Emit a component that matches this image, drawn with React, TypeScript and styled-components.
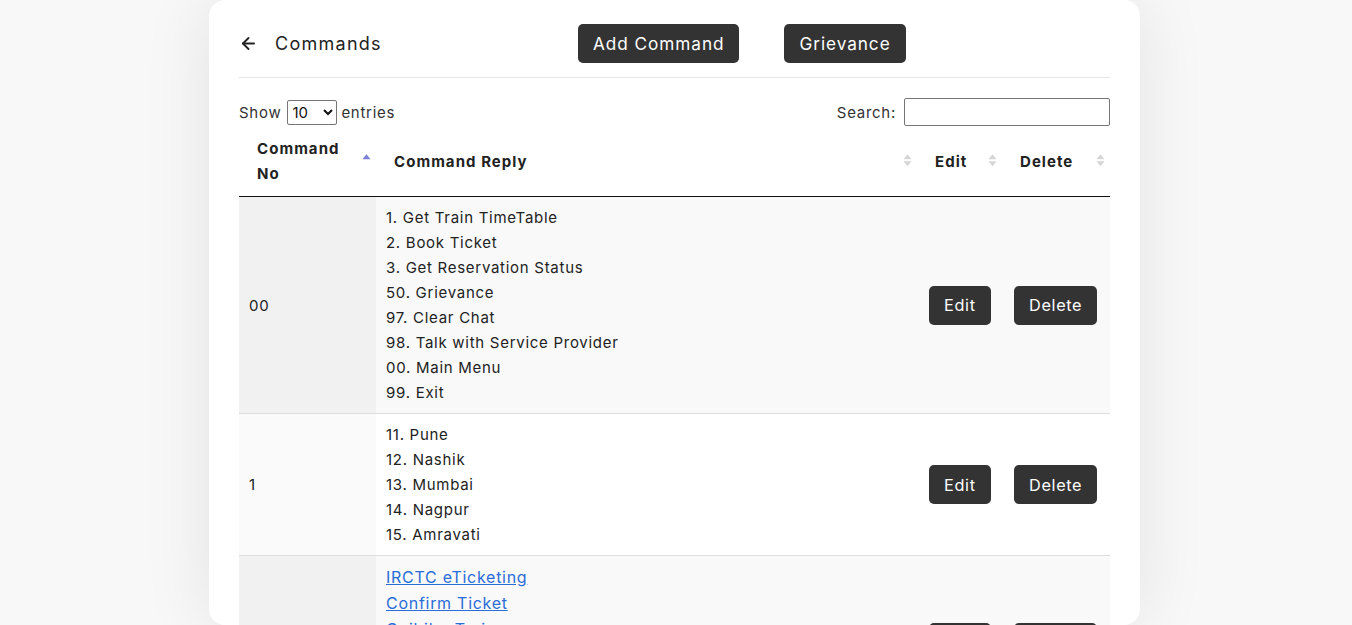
import React from "react";
import styled, { createGlobalStyle } from "styled-components";
import { ArrowLeft } from "lucide-react";

const GlobalStyle = createGlobalStyle`
  html, body {
    margin: 0;
    padding: 0;
    height: 625px;
    overflow: hidden;
    background: #f8f8f8;
    font-family: "Inter", "Open Sans", sans-serif;
    letter-spacing: 0.045em;
    color: #222;
  }
`;

type Row = {
  no: string;
  lines: string[];
  links?: boolean;
};

const rows: Row[] = [
  {
    no: "00",
    lines: [
      "1. Get Train TimeTable",
      "2. Book Ticket",
      "3. Get Reservation Status",
      "50. Grievance",
      "97. Clear Chat",
      "98. Talk with Service Provider",
      "00. Main Menu",
      "99. Exit",
    ],
  },
  {
    no: "1",
    lines: ["11. Pune", "12. Nashik", "13. Mumbai", "14. Nagpur", "15. Amravati"],
  },
  {
    no: "",
    links: true,
    lines: [
      "IRCTC eTicketing",
      "Confirm Ticket",
      "Goibibo Trains",
      "MakeMyTrip Trains",
      "RailYatri",
      "ixigo Trains",
    ],
  },
];

export default function App() {
  return (
    <>
      <GlobalStyle />
      <Page>
        <Card>
          <Header>
            <TitleGroup>
              <ArrowLeft size={19} strokeWidth={2.4} color="#222" />
              <Title>Commands</Title>
            </TitleGroup>
            <DarkButton large>Add Command</DarkButton>
            <DarkButton large>Grievance</DarkButton>
          </Header>

          <Controls>
            <Label>
              Show
              <Select defaultValue="10">
                <option value="10">10</option>
                <option value="25">25</option>
                <option value="50">50</option>
              </Select>
              entries
            </Label>
            <Label>
              Search:
              <SearchInput type="text" />
            </Label>
          </Controls>

          <Table>
            <colgroup>
              <col style={{ width: 137 }} />
              <col style={{ width: 541 }} />
              <col style={{ width: 85 }} />
              <col style={{ width: 108 }} />
            </colgroup>
            <thead>
              <tr>
                <Th>
                  Command
                  <br />
                  No
                  <SortIcon sort="asc" />
                </Th>
                <Th>
                  Command Reply
                  <SortIcon />
                </Th>
                <Th>
                  Edit
                  <SortIcon />
                </Th>
                <Th>
                  Delete
                  <SortIcon />
                </Th>
              </tr>
            </thead>
            <tbody>
              {rows.map((row, i) => (
                <Tr key={i} odd={i % 2 === 0}>
                  <NoCell odd={i % 2 === 0}>{row.no}</NoCell>
                  <Td>
                    {row.lines.map((line) =>
                      row.links ? (
                        <LinkLine key={line} href="#">
                          {line}
                        </LinkLine>
                      ) : (
                        <Line key={line}>{line}</Line>
                      )
                    )}
                  </Td>
                  <ActionCell>
                    <DarkButton>Edit</DarkButton>
                  </ActionCell>
                  <ActionCell>
                    <DarkButton>Delete</DarkButton>
                  </ActionCell>
                </Tr>
              ))}
            </tbody>
          </Table>
        </Card>
      </Page>
    </>
  );
}

function SortIcon({ sort }: { sort?: "asc" }) {
  return (
    <SortWrap>
      <svg width="9" height="16" viewBox="0 0 9 16">
        <path d="M4.5 2 L8.5 7 L0.5 7 Z" fill={sort === "asc" ? "#7c7fd6" : "#d6d6d6"} />
        {!sort && <path d="M4.5 14 L8.5 9 L0.5 9 Z" fill="#d6d6d6" />}
      </svg>
    </SortWrap>
  );
}

const Page = styled.div`
  height: 625px;
  display: flex;
  justify-content: center;
  padding-right: 3px;
`;

const Card = styled.div`
  width: 871px;
  padding: 24px 30px;
  background: #fff;
  border-radius: 16px;
  box-shadow: 0 0 70px rgba(0, 0, 0, 0.09);
`;

const Header = styled.div`
  display: flex;
  align-items: center;
  gap: 45px;
  padding-bottom: 14px;
  border-bottom: 1px solid #e6e6e6;
`;

const TitleGroup = styled.div`
  width: 294px;
  display: flex;
  align-items: center;
  gap: 17px;
`;

const Title = styled.span`
  font-size: 18px;
  letter-spacing: 0.07em;
  color: #222;
`;

const DarkButton = styled.button<{ large?: boolean }>`
  height: 39px;
  padding: 0 15px;
  border: none;
  border-radius: 5px;
  background: #333;
  color: #fff;
  font-family: inherit;
  font-size: ${(p) => (p.large ? "17.2px" : "16.3px")};
  letter-spacing: ${(p) => (p.large ? "0.055em" : "0.04em")};
  cursor: pointer;
`;

const Controls = styled.div`
  display: flex;
  justify-content: space-between;
  align-items: center;
  margin-top: 20px;
  height: 28px;
`;

const Label = styled.label`
  display: flex;
  align-items: center;
  gap: 4px;
  font-size: 15px;
  color: #333;
`;

const Select = styled.select`
  width: 50px;
  height: 25px;
  margin-left: 2px;
  font-family: inherit;
  font-size: 15px;
  border: 1px solid #767676;
  border-radius: 2px;
  background: #fff;
  color: #111;
`;

const SearchInput = styled.input`
  width: 200px;
  height: 24px;
  margin-left: 4px;
  border: 1px solid #767676;
  border-radius: 2px;
  padding: 1px 2px;
`;

const Table = styled.table`
  width: 871px;
  border-collapse: collapse;
  table-layout: fixed;
  font-size: 15px;
  line-height: 25px;
`;

const Th = styled.th`
  position: relative;
  padding: 10px 18px;
  text-align: left;
  font-weight: 700;
  letter-spacing: 0.07em;
  color: #222;
  border-bottom: 1px solid #111;
`;

const SortWrap = styled.span`
  position: absolute;
  right: 5px;
  top: 50%;
  transform: translateY(-55%);
  display: flex;
`;

const Tr = styled.tr<{ odd: boolean }>`
  background: ${(p) => (p.odd ? "#f9f9f9" : "#fff")};
  border-top: 1px solid #ddd;
  &:first-child {
    border-top: none;
  }
`;

const Td = styled.td`
  padding: 8px 10px;
  vertical-align: middle;
  color: #222;
`;

const NoCell = styled(Td)<{ odd: boolean }>`
  background: ${(p) => (p.odd ? "#f1f1f1" : "#fafafa")};
`;

const ActionCell = styled(Td)`
  padding: 8px 12px;
`;

const Line = styled.div``;

const LinkLine = styled.a`
  display: block;
  font-size: 16px;
  line-height: 26px;
  color: #2a6cd8;
  text-decoration: underline;
`;
